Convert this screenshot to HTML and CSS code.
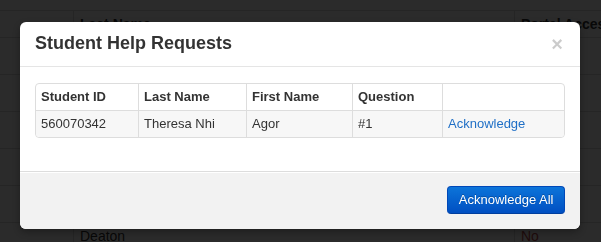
FILE: index.html
```html
<!DOCTYPE html>
<html>
<head>
<meta charset="utf-8">
<link rel="stylesheet" href="styles.css">
</head>
<body>
<div class="page">
  <table class="bg-table">
    <thead>
      <tr><th class="bc1"></th><th class="bc2">Last Name</th><th class="bc3">Portal Access</th></tr>
    </thead>
    <tbody>
      <tr><td class="bc1"></td><td class="bc2">Agor</td><td class="bc3 no">No</td></tr>
      <tr><td class="bc1"></td><td class="bc2">Bishop</td><td class="bc3 no">No</td></tr>
      <tr><td class="bc1"></td><td class="bc2">Carter</td><td class="bc3 no">No</td></tr>
      <tr><td class="bc1"></td><td class="bc2">Chen</td><td class="bc3 no">No</td></tr>
      <tr><td class="bc1"></td><td class="bc2">Davis</td><td class="bc3 no">No</td></tr>
      <tr><td class="bc1"></td><td class="bc2">Deaton</td><td class="bc3 no">No</td></tr>
    </tbody>
  </table>
</div>
<div class="backdrop"></div>
<div class="modal">
  <div class="modal-header">
    <h3 class="modal-title">Student Help Requests</h3>
    <span class="close">&times;</span>
  </div>
  <div class="modal-body">
    <table class="req-table">
      <thead>
        <tr>
          <th class="c1">Student ID</th>
          <th class="c2">Last Name</th>
          <th class="c3">First Name</th>
          <th class="c4">Question</th>
          <th class="c5"></th>
        </tr>
      </thead>
      <tbody>
        <tr>
          <td>560070342</td>
          <td>Theresa Nhi</td>
          <td>Agor</td>
          <td>#1</td>
          <td><a class="link" href="#">Acknowledge</a></td>
        </tr>
      </tbody>
    </table>
  </div>
  <div class="modal-footer">
    <span class="btn-primary">Acknowledge All</span>
  </div>
</div>
</body>
</html>
```

FILE: styles.css
```css
html, body {
  margin: 0;
  padding: 0;
}
body {
  width: 601px;
  height: 242px;
  overflow: hidden;
  background: #fff;
  font-family: "Liberation Sans", Arial, sans-serif;
  font-size: 14px;
  color: #333;
}
.page {
  padding-top: 10px;
  height: 232px;
  width: 601px;
  overflow: hidden;
}
.bg-table {
  border-collapse: separate;
  border-spacing: 0;
  width: 640px;
}
.bg-table th,
.bg-table td {
  border-top: 1px solid #ddd;
  line-height: 20px;
  text-align: left;
  padding: 3px 6px 13px;
  box-sizing: border-box;
  white-space: nowrap;
}
.bg-table th {
  padding-bottom: 3px;
  font-weight: bold;
}
.bg-table .bc1 { width: 73px; }
.bg-table .bc2 { width: 441px; border-left: 1px solid #ddd; }
.bg-table .bc3 { border-left: 1px solid #ddd; }
.bg-table .no { color: #b94a48; }

.backdrop {
  position: fixed;
  inset: 0;
  background: rgba(0, 0, 0, 0.83);
}
.modal {
  position: absolute;
  left: 20px;
  top: 22px;
  width: 560px;
  background: #fff;
  border-radius: 6px;
  box-shadow: 0 3px 7px rgba(0, 0, 0, 0.3);
  overflow: hidden;
}
.modal-header {
  display: flex;
  justify-content: space-between;
  align-items: center;
  padding: 8px 15px 9px;
  border-bottom: 1px solid #e5e5e5;
}
.modal-title {
  margin: 0;
  font-size: 18px;
  line-height: 27px;
  font-weight: bold;
  color: #333;
}
.close {
  font-size: 20px;
  font-weight: bold;
  line-height: 20px;
  color: #000;
  opacity: 0.2;
  margin-right: 2px;
  text-shadow: 0 1px 0 #fff;
}
.modal-body {
  padding: 16px 15px 15px;
}
.req-table {
  width: 530px;
  border-collapse: separate;
  border-spacing: 0;
  border: 1px solid #ddd;
  border-radius: 4px;
  margin-bottom: 18px;
  font-size: 13px;
  table-layout: fixed;
}
.req-table th,
.req-table td {
  box-sizing: border-box;
  padding: 4px 5px;
  line-height: 18px;
  text-align: left;
  border-left: 1px solid #ddd;
}
.req-table th:first-child,
.req-table td:first-child {
  border-left: 0;
}
.req-table th {
  font-weight: bold;
  color: #333;
}
.req-table td {
  border-top: 1px solid #ddd;
  background: #f7f7f7;
}
.req-table tbody tr td:first-child { border-bottom-left-radius: 4px; }
.req-table tbody tr td:last-child { border-bottom-right-radius: 4px; }
.req-table .c1 { width: 102px; }
.req-table .c2 { width: 108px; }
.req-table .c3 { width: 106px; }
.req-table .c4 { width: 90px; }
.req-table .c5 { width: 122px; }
.link {
  color: #1f6fc6;
  text-decoration: none;
}
.modal-footer {
  padding: 14px 15px 15px;
  background: #f2f2f2;
  border-top: 1px solid #ddd;
  box-shadow: inset 0 1px 0 #fff;
  display: flex;
  justify-content: flex-end;
}
.btn-primary {
  display: inline-block;
  padding: 4px 10.5px;
  font-size: 13px;
  line-height: 18px;
  color: #fff;
  background: linear-gradient(to bottom, #0c74d9, #004fc2);
  border: 1px solid #0048b8;
  border-bottom-color: #003e9e;
  border-radius: 4px;
  text-shadow: 0 -1px 0 rgba(0, 0, 0, 0.25);
}
```
